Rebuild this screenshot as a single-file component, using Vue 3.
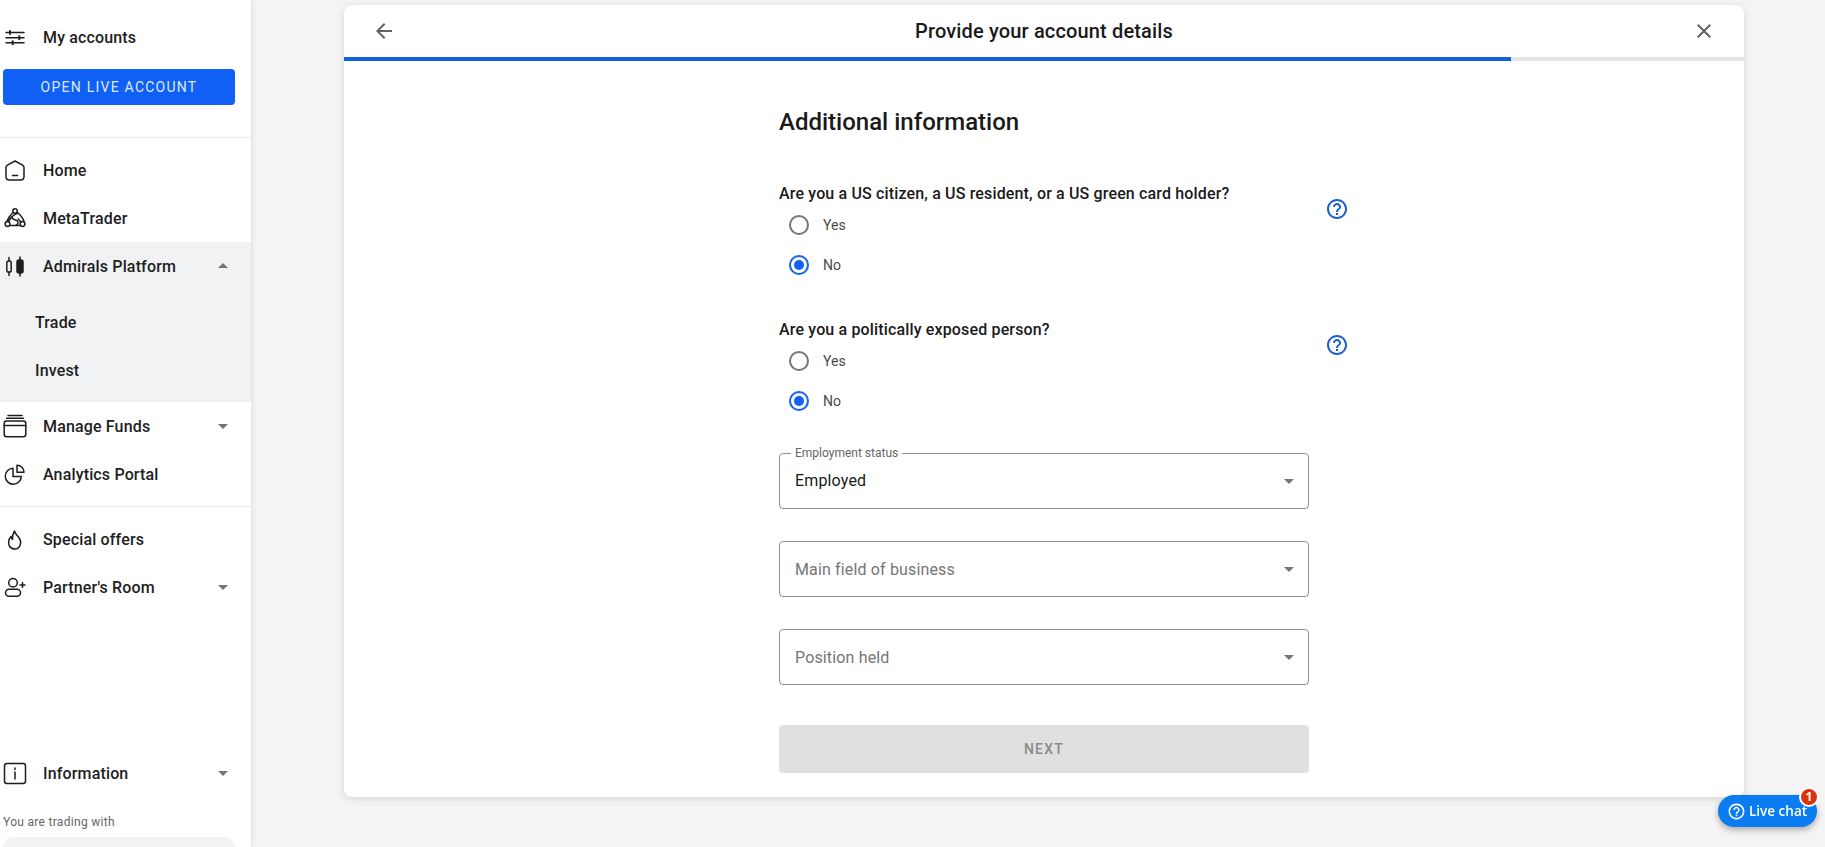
<script setup>
const help = 'M11 18h2v-2h-2v2zm1-16C6.48 2 2 6.48 2 12s4.48 10 10 10 10-4.48 10-10S17.52 2 12 2zm0 18c-4.41 0-8-3.59-8-8s3.59-8 8-8 8 3.59 8 8-3.59 8-8 8zm0-14c-2.21 0-4 1.79-4 4h2c0-1.1.9-2 2-2s2 .9 2 2c0 2-3 1.75-3 5h2c0-2.25 3-2.5 3-5 0-2.21-1.79-4-4-4z'
const questions = [
  { text: 'Are you a US citizen, a US resident, or a US green card holder?' },
  { text: 'Are you a politically exposed person?' }
]
const selects = [
  { label: 'Employment status', value: 'Employed' },
  { placeholder: 'Main field of business' },
  { placeholder: 'Position held' }
]
</script>

<template>
  <div class="page">
    <aside class="sidebar">
      <div class="row first">
        <svg class="ico" viewBox="0 0 24 24"><path d="M3 7.500h18M3 12.700h18M3 17.800h18" /><path d="M7 6v3M16.300 11.200v3M9.700 16.300v3" stroke-width="2" /></svg>
        <span>My accounts</span>
      </div>
      <button class="open">OPEN LIVE ACCOUNT</button>
      <hr class="rule top" />
      <div class="row">
        <svg class="ico" viewBox="0 0 24 24"><path d="M12 3 4.400 7.200C3.500 7.700 3 8.500 3 9.500V18.500C3 20.500 4.500 22 6.500 22h11c2 0 3.500-1.500 3.500-3.500v-9c0-1-.5-1.800-1.400-2.300L12 3Z" /><path d="M9.500 17.500h5" /></svg>
        <span>Home</span>
      </div>
      <div class="row">
        <svg class="ico" viewBox="0 0 24 24" stroke-width="1.800"><circle cx="12" cy="5" r="2.200" /><circle cx="4.500" cy="18" r="2.400" /><circle cx="19.500" cy="18" r="2.400" /><path d="M9.500 7C7 9.500 5 12.500 3.800 15.500M14.500 6.500C17.500 9 20 12 21 15.500M7 19.500h10M15 7C12.500 8.500 9 9 9 11.500c0 2.500 5.500 2 6 4.500.3 1.500-1 3.500-3.500 3.500M8.500 11 5.500 15.500M15 13l3 3" /></svg>
        <span>MetaTrader</span>
      </div>
      <div class="group">
        <div class="row">
          <svg class="ico" viewBox="0 0 24 24"><rect x="3.800" y="7" width="4.400" height="11" rx="1.800" /><path d="M6 3.500V7M6 18v3.500M17 3v19" /><rect x="14" y="6" width="6" height="13" rx="2" fill="#1e1e1e" /></svg>
          <span>Admirals Platform</span>
          <svg class="caret up" viewBox="0 0 24 24"><path d="M7 10l5 5 5-5z" /></svg>
        </div>
        <div class="sub">Trade</div>
        <div class="sub">Invest</div>
      </div>
      <div class="row">
        <svg class="ico" viewBox="0 0 24 24"><rect x="1.200" y="7" width="21.600" height="15.800" rx="2.500" /><path d="M1.200 11.500h21.600M3.500 4.200h17M5 1.500h14" /></svg>
        <span>Manage Funds</span>
        <svg class="caret" viewBox="0 0 24 24"><path d="M7 10l5 5 5-5z" /></svg>
      </div>
      <div class="row">
        <svg class="ico" viewBox="0 0 24 24"><path d="M10 6.200a8 8 0 1 0 8.300 8.300H10V6.200Z" /><path d="M14 3.200a7 7 0 0 1 7 7h-7v-7Z" /></svg>
        <span>Analytics Portal</span>
      </div>
      <hr class="rule mid" />
      <div class="row">
        <svg class="ico" viewBox="0 0 24 24"><path d="M11.500 4c.8 3.500 3 4.500 5 7.500 2.300 3.500 1 10.500-4.500 10.500S5 17.500 5.800 13.500c.4-1.800 1.200-3 2.200-4 .2 1.500.7 2.300 1.500 2.800C9.300 9.500 9.800 6.500 11.500 4Z" /></svg>
        <span>Special offers</span>
      </div>
      <div class="row">
        <svg class="ico" viewBox="0 0 24 24"><circle cx="10" cy="7.700" r="4.300" /><rect x="2.500" y="14.200" width="15" height="7" rx="3.500" /><path d="M17 10h5M19.500 7.500v5" /></svg>
        <span>Partner's Room</span>
        <svg class="caret" viewBox="0 0 24 24"><path d="M7 10l5 5 5-5z" /></svg>
      </div>
      <div class="row info">
        <svg class="ico" viewBox="0 0 24 24"><rect x="1.500" y="2.500" width="21" height="20" rx="2.500" /><path d="M12 11v7" /><path d="M12 7v1.600" /></svg>
        <span>Information</span>
        <svg class="caret" viewBox="0 0 24 24"><path d="M7 10l5 5 5-5z" /></svg>
      </div>
      <div class="trading">You are trading with</div>
      <div class="entity"></div>
    </aside>

    <main class="main">
      <section class="card">
        <header class="head">
          <svg class="hbtn" viewBox="0 0 24 24"><path d="M20 11H7.830l5.590-5.590L12 4l-8 8 8 8 1.410-1.410L7.830 13H20v-2z" /></svg>
          <h1>Provide your account details</h1>
          <svg class="hbtn" viewBox="0 0 24 24"><path d="M19 6.410 17.590 5 12 10.590 6.410 5 5 6.410 10.590 12 5 17.590 6.410 19 12 13.410 17.590 19 19 17.590 13.410 12 19 6.410z" /></svg>
        </header>
        <div class="track"><div class="bar"></div></div>

        <form class="form">
          <h2>Additional information</h2>
          <div v-for="q in questions" :key="q.text" class="question">
            <div class="qbody">
              <p>{{ q.text }}</p>
              <div class="radio"><i class="dot"></i><span>Yes</span></div>
              <div class="radio"><i class="dot on"></i><span>No</span></div>
            </div>
            <svg class="help" viewBox="0 0 24 24"><path :d="help" /></svg>
          </div>
          <div v-for="s in selects" :key="s.label || s.placeholder" class="select">
            <span v-if="s.label" class="legend">{{ s.label }}</span>
            <span :class="s.value ? 'value' : 'holder'">{{ s.value || s.placeholder }}</span>
            <svg class="sel-caret" viewBox="0 0 24 24"><path d="M7 10l5 5 5-5z" /></svg>
          </div>
          <button type="button" class="next">NEXT</button>
        </form>
      </section>
    </main>

    <div class="chat">
      <svg viewBox="0 0 24 24"><path :d="help" /></svg>
      <span>Live chat</span>
      <b class="badge">1</b>
    </div>
  </div>
</template>

<style scoped>
.page {
  display: flex;
  height: 847px;
  overflow: hidden;
  background: #f4f4f4;
  font-family: Roboto, "Liberation Sans", sans-serif;
  color: #1e1e1e;
}
.sidebar {
  flex: 0 0 251px;
  display: flex;
  flex-direction: column;
  height: 847px;
  background: #fff;
  box-shadow: 0 0 6px rgba(0, 0, 0, .12);
  position: relative;
}
.row {
  display: flex;
  align-items: center;
  flex: 0 0 48px;
  height: 48px;
  padding: 0 16px 0 3px;
  font-size: 16px;
  font-weight: 500;
  letter-spacing: .15px;
}
.row > span { flex: 1; margin-left: 16px; }
.first { margin-top: 13px; }
.ico {
  flex: 0 0 24px;
  width: 24px;
  height: 24px;
  fill: none;
  stroke: #1e1e1e;
  stroke-width: 1.5;
  stroke-linecap: round;
  stroke-linejoin: round;
}
.caret {
  width: 24px;
  height: 24px;
  fill: #757575;
}
.caret.up { transform: rotate(180deg); }
.open {
  flex: 0 0 36px;
  width: 232px;
  margin: 8px 0 0 3px;
  border: 0;
  border-radius: 4px;
  background: #1060f5;
  color: #dfe9ff;
  font-family: inherit;
  font-size: 14px;
  font-weight: 400;
  letter-spacing: 1.25px;
}
.rule {
  flex: 0 0 1px;
  width: 100%;
  height: 1px;
  border: 0;
  background: #e8e8e8;
}
.rule.top { margin: 32px 0 8px; }
.rule.mid { margin: 8px 0; }
.group {
  padding-bottom: 7px;
  background: #f0f2f4;
}
.sub {
  height: 48px;
  padding-left: 35px;
  font-size: 16px;
  font-weight: 500;
  line-height: 48px;
  letter-spacing: .15px;
}
.group .row + .sub { margin-top: 9px; }
.info { margin-top: auto; }
.trading {
  margin: 13px 0 0 3px;
  font-size: 12px;
  line-height: 24px;
  letter-spacing: .3px;
  color: #666;
}
.entity {
  flex: 0 0 40px;
  width: 232px;
  margin: 3px 0 -30px 3px;
  border-radius: 10px;
  background: #f3f3f3;
}
.main {
  flex: 1;
  padding: 5px 0 0 93px;
}
.card {
  width: 1400px;
  height: 792px;
  border-radius: 8px;
  background: #fff;
  box-shadow: 0 2px 8px rgba(0, 0, 0, .12);
}
.head {
  display: flex;
  align-items: center;
  height: 52px;
  padding: 0 28px;
}
.head h1 {
  flex: 1;
  margin: 0;
  font-size: 20px;
  font-weight: 500;
  line-height: 24px;
  letter-spacing: .15px;
  text-align: center;
  color: #1a1a1a;
}
.hbtn {
  flex: 0 0 24px;
  width: 24px;
  height: 24px;
  fill: #5f6368;
}
.track {
  height: 4px;
  background: #e5e5e5;
}
.bar {
  width: 1167px;
  height: 4px;
  background: #1060d8;
}
.form {
  display: flex;
  flex-direction: column;
  width: 530px;
  margin: 0 auto;
  padding-top: 45px;
}
.form h2 {
  margin: 0 0 43px;
  font-size: 24px;
  font-weight: 500;
  line-height: 32px;
  color: #1a1a1a;
}
.question {
  display: flex;
  margin-bottom: 32px;
}
.qbody { flex: 0 0 530px; }
.qbody p {
  height: 24px;
  margin: 0;
  font-size: 16px;
  font-weight: 500;
  line-height: 26px;
  letter-spacing: .15px;
  color: #1a1a1a;
}
.help {
  flex: 0 0 24px;
  width: 24px;
  height: 24px;
  margin: 16px -40px 0 16px;
  fill: #1a5fd0;
}
.radio {
  display: flex;
  align-items: center;
  height: 40px;
  padding-left: 10px;
  font-size: 14px;
  color: #4a4a4a;
}
.radio span { margin-left: 14px; }
.dot {
  display: flex;
  align-items: center;
  justify-content: center;
  box-sizing: border-box;
  width: 20px;
  height: 20px;
  border: 2px solid #757575;
  border-radius: 50%;
}
.dot.on { border-color: #1060f5; }
.dot.on::after {
  content: "";
  width: 10px;
  height: 10px;
  border-radius: 50%;
  background: #1060f5;
}
.select {
  position: relative;
  display: flex;
  align-items: center;
  justify-content: space-between;
  box-sizing: border-box;
  height: 56px;
  margin-bottom: 32px;
  padding: 0 7px 0 15px;
  border: 1px solid #8f8f8f;
  border-radius: 4px;
  font-size: 16px;
  letter-spacing: .15px;
}
.legend {
  position: absolute;
  top: -8px;
  left: 11px;
  padding: 0 4px;
  background: #fff;
  font-size: 12px;
  line-height: 14px;
  letter-spacing: 0;
  color: #666;
}
.value { padding-bottom: 2px; color: #1a1a1a; }
.holder { color: #757575; }
.sel-caret {
  width: 24px;
  height: 24px;
  fill: #757575;
}
.next {
  height: 48px;
  margin-top: 8px;
  border: 0;
  border-radius: 4px;
  background: #e0e0e0;
  color: #8a8a8a;
  font-family: inherit;
  font-size: 14px;
  font-weight: 500;
  letter-spacing: 1.25px;
}
.chat {
  position: fixed;
  left: 1718px;
  top: 795px;
  display: flex;
  align-items: center;
  box-sizing: border-box;
  width: 99px;
  height: 32px;
  padding-left: 9px;
  border-radius: 16px;
  background: #0a7cf0;
  box-shadow: 0 3px 6px rgba(0, 0, 0, .3);
  color: #fff;
  font-family: "Open Sans", sans-serif;
  font-size: 13.500px;
  font-weight: 600;
}
.chat svg {
  width: 19px;
  height: 19px;
  margin-right: 3px;
  fill: #fff;
}
.badge {
  position: absolute;
  top: -8px;
  right: -2px;
  box-sizing: border-box;
  width: 20px;
  height: 20px;
  border: 2px solid #fff;
  border-radius: 50%;
  background: #d9330f;
  font-size: 12px;
  font-weight: 700;
  line-height: 16px;
  text-align: center;
}
</style>

<style>
html, body { margin: 0; overflow: hidden; background: #f4f4f4; }
</style>
